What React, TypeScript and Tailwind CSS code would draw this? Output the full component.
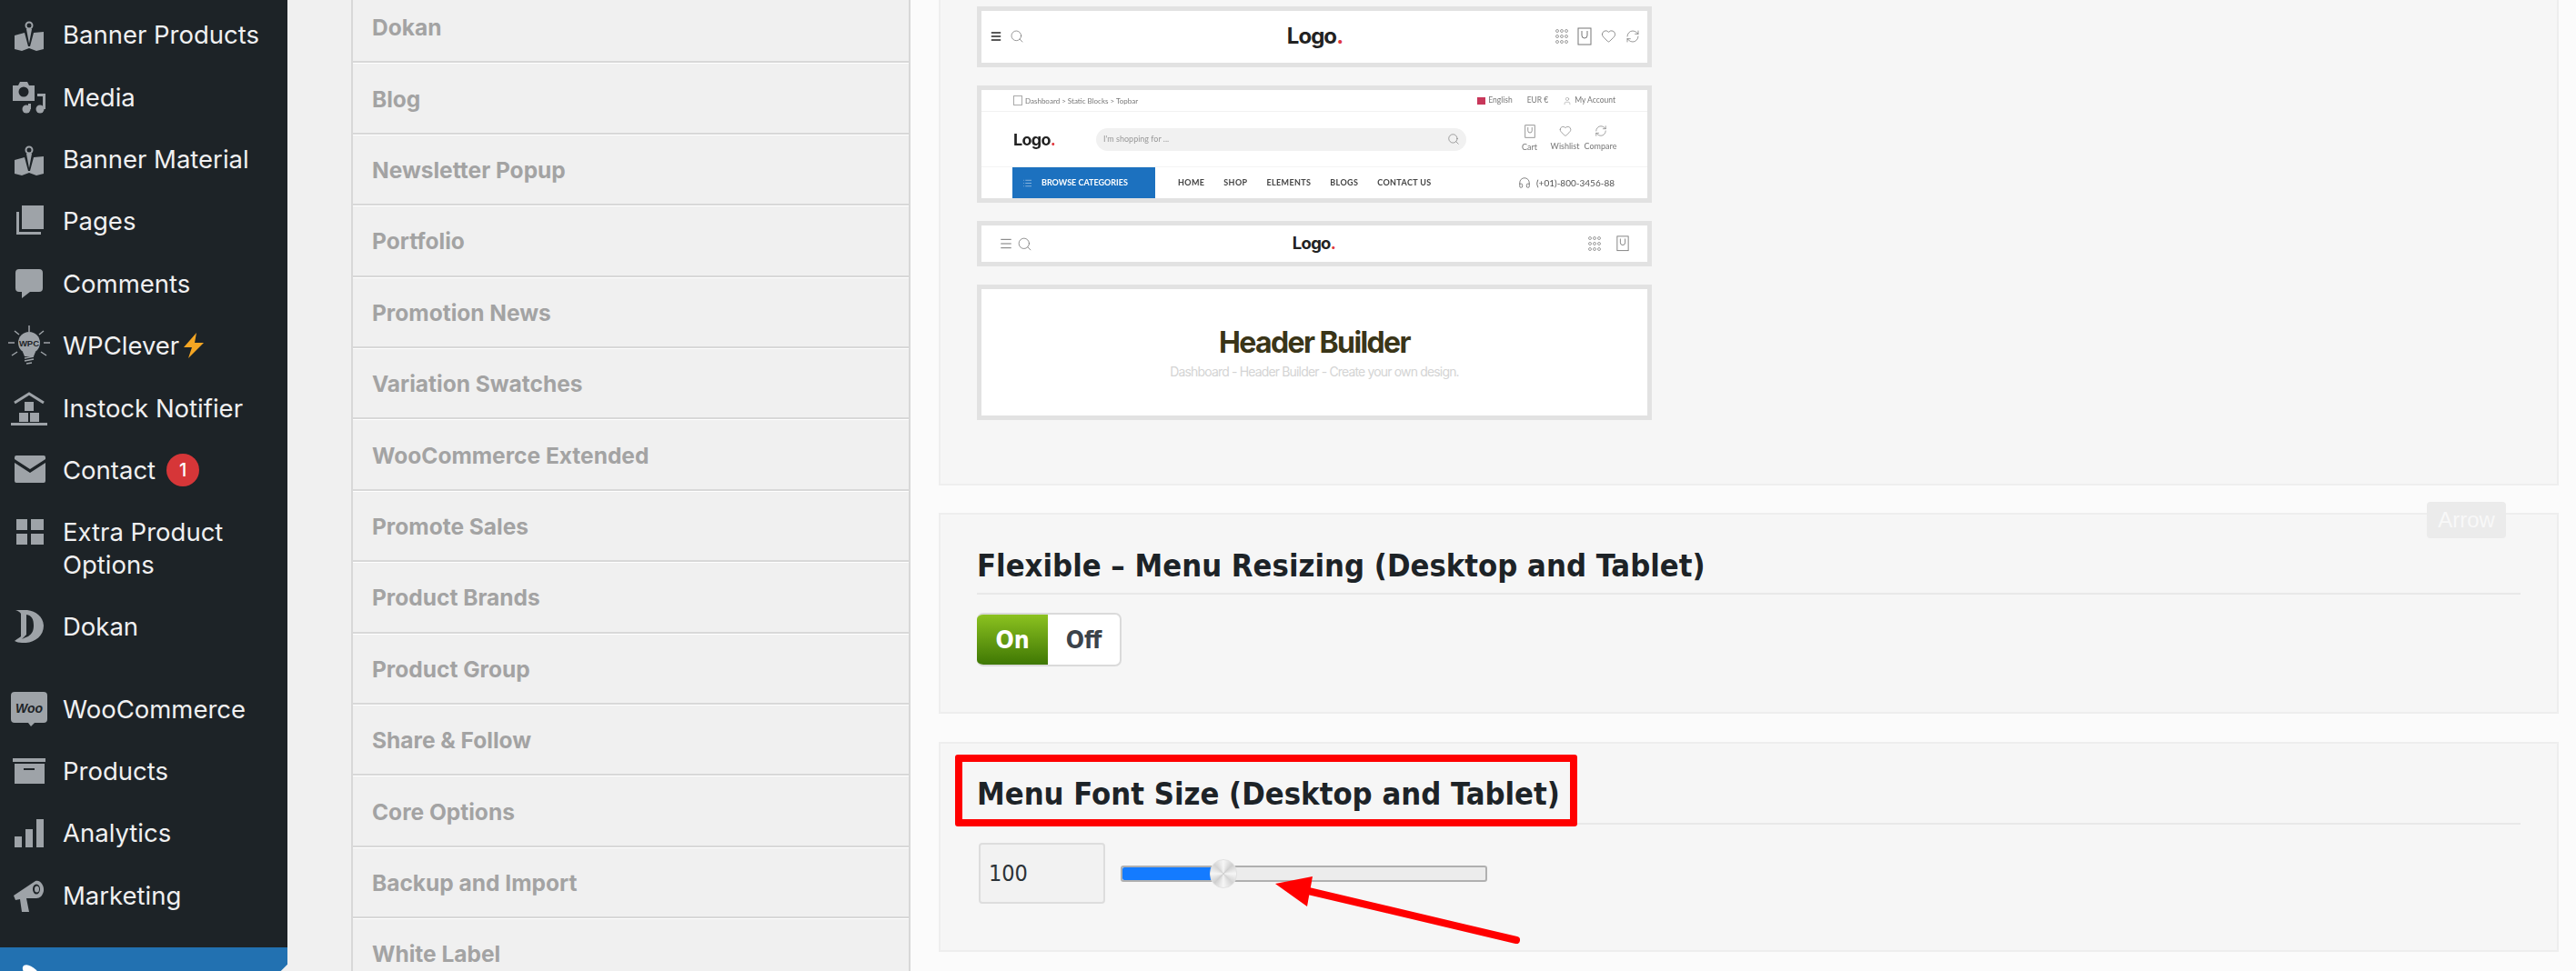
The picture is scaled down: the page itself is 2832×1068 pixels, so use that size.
import { Heart, Headphones, List, Menu, RefreshCw, Search, User } from "lucide-react";
import type { ReactNode } from "react";

const dejavu = "font-['DejaVu_Sans_Condensed','DejaVu_Sans',sans-serif] font-stretch-condensed";

function Icon({ children }: { children: ReactNode }) {
  return (
    <svg width="36" height="36" viewBox="0 0 36 36" className="shrink-0 fill-[#9ea3a8]">
      {children}
    </svg>
  );
}

const BannerIcon = (
  <Icon>
    <path d="M2 19l11-3 4 15h2l4-15 11-1v19l-8 2-8-3-8 3-8-2z" />
    <path d="M15 12l3 16 3-16z" />
    <circle cx="18" cy="8" r="3.5" fill="none" stroke="#9ea3a8" strokeWidth="2" />
  </Icon>
);

const icons: Record<string, ReactNode> = {
  banner: BannerIcon,
  media: (
    <Icon>
      <path d="M0 5h6l2-4h8l2 4h6v17H0z" />
      <circle cx="12" cy="12" r="5.5" fill="#1d2327" />
      <path d="M27 14h9v17h-3V17h-6z" />
      <circle cx="30" cy="31" r="4.5" />
      <circle cx="15" cy="31" r="4.5" />
      <path d="M17 25h3v6h-3z" />
    </Icon>
  ),
  pages: (
    <Icon>
      <path d="M10 1h24v26H10z" />
      <path d="M4 8h3v22h24v3H4z" />
    </Icon>
  ),
  comments: (
    <Icon>
      <path d="M7 2h22a4 4 0 0 1 4 4v17a4 4 0 0 1-4 4H19l-9 7v-7H7a4 4 0 0 1-4-4V6a4 4 0 0 1 4-4z" />
    </Icon>
  ),
  wpc: (
    <svg width="48" height="48" viewBox="0 0 48 48" className="shrink-0 -mx-[6px]">
      <g stroke="#9ea3a8" strokeWidth="1.5">
        <path d="M24 2v7M8 8l5 4M40 8l-5 4M1 21h7M47 21h-7M5 35l6-4M43 35l-6-4" />
      </g>
      <circle cx="24" cy="21" r="12" fill="#9ea3a8" />
      <path d="M17 31h14l-2 5H19z" fill="#9ea3a8" />
      <path d="M19 38l10-2M19 41l10-2M21 44l6-1" stroke="#9ea3a8" strokeWidth="1.6" />
      <text x="24" y="24.5" textAnchor="middle" fontSize="9.5" fontWeight="700" fill="#1d2327" fontFamily="Liberation Sans">WPC</text>
    </svg>
  ),
  stock: (
    <svg width="40" height="40" viewBox="0 0 40 40" className="shrink-0 -mx-[2px]">
      <path d="M4 14L20 4l16 10" fill="none" stroke="#9ea3a8" strokeWidth="3" />
      <path d="M15 13h10v10H15zM9 25h10v10H9zM21 25h10v10H21zM0 36h40v3H0z" fill="#9ea3a8" />
    </svg>
  ),
  mail: (
    <Icon>
      <path d="M4 2h30a2 2 0 0 1 2 2v2L19 17 2 6V4a2 2 0 0 1 2-2z" />
      <path d="M2 10l17 11 17-11v20a2 2 0 0 1-2 2H4a2 2 0 0 1-2-2z" />
    </Icon>
  ),
  grid: (
    <Icon>
      <path d="M4 4h12v12H4zM20 4h14v12H20zM4 20h12v12H4zM20 20h14v12H20z" />
    </Icon>
  ),
  dokan: (
    <Icon>
      <path d="M3 0c14-2 30 2 31 17 0 13-12 20-24 19-3 0-6-1-8-2 4-3 6-4 7-5V4C8 2 6 1 3 0z" />
      <path d="M15 5c6 1 8 5 8 12 0 6-2 9-6 12-3 1-5 2-7 3l5-5z" fill="#1d2327" />
    </Icon>
  ),
  woo: (
    <svg width="40" height="40" viewBox="0 0 40 40" className="shrink-0 -mx-[2px]">
      <path d="M4 1h32a4 4 0 0 1 4 4v26a4 4 0 0 1-4 4H26l-4 4-3-4H4a4 4 0 0 1-4-4V5a4 4 0 0 1 4-4z" fill="#9ea3a8" />
      <text x="20" y="24" textAnchor="middle" fontSize="14" fontWeight="700" fontStyle="italic" fill="#1d2327" fontFamily="Liberation Sans">Woo</text>
    </svg>
  ),
  box: (
    <Icon>
      <path d="M0 4h36v4H0z" />
      <path d="M2 10h33v22H2zM12 15v2h12v-2z" fillRule="evenodd" />
    </Icon>
  ),
  chart: (
    <Icon>
      <path d="M2 22h8v12H2zM14 14h8v20h-8zM26 3h8v31h-8z" />
    </Icon>
  ),
  megaphone: (
    <Icon>
      <path d="M1 18L25 2c5-2 10 5 9 11-1 5-4 8-8 8l-11 0 3 15h-8l-2-14-5 1z" />
      <ellipse cx="26" cy="11" rx="4" ry="5.5" fill="#1d2327" />
      <ellipse cx="26.500" cy="11" rx="2.500" ry="3.500" fill="#9ea3a8" />
    </Icon>
  ),
};

function SideItem({ icon, label, tall, children }: { icon: string; label: string; tall?: boolean; children?: ReactNode }) {
  return (
    <div className={`shrink-0 flex gap-[19px] pl-[14px] pr-3 ${tall ? "h-[104px] items-start pt-[16px]" : "h-[68.400px] items-center"}`}>
      {icons[icon]}
      <span className="text-[#f0f0f1] text-[27.500px] leading-[36px] flex items-center">
        {label}
        {children}
      </span>
    </div>
  );
}

function Sidebar() {
  return (
    <aside className="w-[316px] shrink-0 bg-[#1d2327] flex flex-col pt-[4px] font-['Inter'] relative">
      <SideItem icon="banner" label="Banner Products" />
      <SideItem icon="media" label="Media" />
      <SideItem icon="banner" label="Banner Material" />
      <SideItem icon="pages" label="Pages" />
      <SideItem icon="comments" label="Comments" />
      <SideItem icon="wpc" label="WPClever">
        <svg width="26" height="30" viewBox="0 0 26 30" className="ml-[3px]">
          <path d="M16 1L2 17h9l-4 12 17-17h-10z" fill="#f5a623" />
        </svg>
      </SideItem>
      <SideItem icon="stock" label="Instock Notifier" />
      <SideItem icon="mail" label="Contact">
        <span className="ml-[12px] w-[36px] h-[36px] rounded-full bg-[#d63638] text-white text-[20px] font-medium flex items-center justify-center">
          1
        </span>
      </SideItem>
      <SideItem icon="grid" label="Extra Product Options" tall />
      <SideItem icon="dokan" label="Dokan" />
      <div className="h-[22px] shrink-0" />
      <SideItem icon="woo" label="WooCommerce" />
      <SideItem icon="box" label="Products" />
      <SideItem icon="chart" label="Analytics" />
      <SideItem icon="megaphone" label="Marketing" />
      <div className="mt-[23px] h-[80px] shrink-0 bg-[#2271b1] flex gap-[19px] pl-[14px] pt-[18px] relative">
        <svg width="36" height="36" viewBox="0 0 36 36" className="shrink-0">
          <path d="M12 2c4-2 8 0 14 5l4 6-8 6-6-5C12 10 9 5 12 2z" fill="#fff" />
        </svg>
        <span className="text-white text-[27.500px] leading-[36px] font-semibold">Appearance</span>
        <span className="absolute right-[-11.500px] top-[22.500px] w-[23px] h-[23px] bg-[#f0f0f0] rotate-45" />
      </div>
    </aside>
  );
}

const tabs = [
  "Dokan",
  "Blog",
  "Newsletter Popup",
  "Portfolio",
  "Promotion News",
  "Variation Swatches",
  "WooCommerce Extended",
  "Promote Sales",
  "Product Brands",
  "Product Group",
  "Share & Follow",
  "Core Options",
  "Backup and Import",
  "White Label",
];

function TabList() {
  return (
    <div className="shrink-0 w-[685px] bg-[#f0f0f0] pl-[70px]">
      <ul className="w-[615px] -mt-[9px] border-x-2 border-[#d8d8d8] font-['Inter']">
        {tabs.map((tab) => (
          <li
            key={tab}
            className="h-[78.400px] pl-[21px] pt-[2px] flex items-center border-b-2 border-b-[#d8d8d8] border-t border-t-white text-[24.500px] font-bold text-[#a3a3a3]"
          >
            {tab}
          </li>
        ))}
      </ul>
    </div>
  );
}

function Logo({ size }: { size: string }) {
  return (
    <span className={`font-['Inter'] font-bold tracking-[-0.04em] text-[#222] ${size}`}>
      Logo<span className="text-[#e0383e]">.</span>
    </span>
  );
}

function Dots() {
  const spots = [0, 1, 2];
  return (
    <svg width="14" height="18" viewBox="0 0 14 18" fill="none" stroke="#888" strokeWidth="0.8">
      {spots.map((r) => spots.map((c) => <circle key={`${r}-${c}`} cx={2 + c * 5} cy={3 + r * 6} r="1.500" />))}
    </svg>
  );
}

function Bag({ size = 16 }: { size?: number }) {
  return (
    <svg width={size} height={size * 1.25} viewBox="0 0 16 20" fill="none" stroke="#777" strokeWidth="1">
      <rect x="1" y="1" width="14" height="18" />
      <path d="M5 4v5a3 3 0 0 0 6 0V4" />
    </svg>
  );
}

const thin = { strokeWidth: 1, color: "#666" };

function HeaderOne() {
  return (
    <div className="h-[67px] border-[5px] border-[#e2e2e2] bg-white flex items-center pb-[2px] pl-[9px] pr-[8px]">
      <div className="flex-1 flex items-center gap-[8px]">
        <Menu size={14} strokeWidth={2.500} color="#222" />
        <Search size={16} {...thin} />
      </div>
      <Logo size="text-[24px]" />
      <div className="flex-1 flex items-center justify-end gap-[10px]">
        <Dots />
        <Bag />
        <Heart size={17} {...thin} />
        <RefreshCw size={16} {...thin} />
      </div>
    </div>
  );
}

function HeaderTwo() {
  return (
    <div className="h-[129px] border-[5px] border-[#e2e2e2] bg-white flex flex-col font-['Lato'] blur-[0.3px]">
      <div className="h-[24px] shrink-0 px-[35px] flex items-center justify-between border-b border-[#f1f1f1] text-[8px] text-[#777]">
        <span className="flex items-center gap-[3px]">
          <span className="w-[10px] h-[11px] border border-[#aaa]" />
          Dashboard &gt; Static Blocks &gt; Topbar
        </span>
        <span className="flex items-center gap-[16px] text-[8.500px]">
          <span className="flex items-center gap-[3px]">
            <span className="w-[9px] h-[8px] bg-[#c8375a]" />
            English
          </span>
          <span>EUR €</span>
          <span className="flex items-center gap-[3px]">
            <User size={10} strokeWidth={1} />
            My Account
          </span>
        </span>
      </div>
      <div className="h-[61px] shrink-0 pl-[35px] pr-[32px] flex items-center border-b border-[#f4f4f4]">
        <span className="w-[91px]">
          <Logo size="text-[18px]" />
        </span>
        <div className="w-[407px] h-[25px] rounded-full bg-[#f1f1f1] flex items-center justify-between pl-[8px] pr-[7px] text-[9px] text-[#999]">
          I&apos;m shopping for ...
          <Search size={14} {...thin} />
        </div>
        <div className="ml-auto flex text-[#777] text-[9px] text-center">
          <span className="w-[39px] flex flex-col items-center gap-[3px]">
            <Bag size={12} />
            Cart
          </span>
          <span className="w-[39px] flex flex-col items-center gap-[3px]">
            <Heart size={14} {...thin} />
            Wishlist
          </span>
          <span className="w-[39px] flex flex-col items-center gap-[3px]">
            <RefreshCw size={14} {...thin} />
            Compare
          </span>
        </div>
      </div>
      <div className="flex-1 pl-[34px] pr-[36px] flex items-center text-[9px]">
        <div className="w-[157px] self-stretch bg-[#1c71bf] text-white font-bold flex items-center gap-[10px] pl-[11px]">
          <List size={11} strokeWidth={1} />
          BROWSE CATEGORIES
        </div>
        <div className="ml-[25px] flex gap-[21px] tracking-[0.04em] font-bold text-[#444]">
          <span>HOME</span>
          <span>SHOP</span>
          <span>ELEMENTS</span>
          <span>BLOGS</span>
          <span>CONTACT US</span>
        </div>
        <span className="ml-auto flex items-center gap-[6px] text-[10px] text-[#555]">
          <Headphones size={14} strokeWidth={1.200} />
          (+01)-800-3456-88
        </span>
      </div>
    </div>
  );
}

function HeaderThree() {
  return (
    <div className="h-[50px] border-[5px] border-[#e2e2e2] bg-white flex items-center pl-[19px] pr-[20px]">
      <div className="flex-1 flex items-center gap-[4px]">
        <Menu size={16} strokeWidth={1.500} color="#777" />
        <Search size={17} {...thin} />
      </div>
      <Logo size="text-[18.500px]" />
      <div className="flex-1 flex items-center justify-end gap-[17px]">
        <Dots />
        <Bag size={14} />
      </div>
    </div>
  );
}

function HeaderFour() {
  return (
    <div className="h-[149px] border-[5px] border-[#e2e2e2] bg-white flex flex-col items-center justify-center font-['Inter']">
      <span className="text-[32px] leading-[40px] font-bold tracking-[-0.05em] text-[#3a3518]">Header Builder</span>
      <span className="mt-[1px] text-[14px] tracking-[-0.06em] text-[#d4d4d4]">Dashboard - Header Builder - Create your own design.</span>
    </div>
  );
}

function Heading({ children }: { children: ReactNode }) {
  return <h3 className={`${dejavu} font-bold text-[34.300px] leading-[40px] text-[#1d2327]`}>{children}</h3>;
}

function FontSizeSlider() {
  return (
    <div className="mt-[20px] flex items-center pl-[2px]">
      <div className={`${dejavu} w-[139px] h-[67px] rounded-[4px] border-2 border-[#dddddd] bg-[#f2f2f2] flex items-center pl-[9px] text-[25px] text-[#2c3338]`}>
        100
      </div>
      <div className="ml-[17px] relative w-[403px] h-[18px] rounded-[3px] border-2 border-[#b0b0b0] bg-[#ececec]">
        <div className="h-full w-[113px] rounded-l-[2px] bg-[#147bff]" />
        <span className="absolute left-[96px] top-[-9px] w-[30px] h-[32px] rounded-full border border-[#e2e2e2] bg-[conic-gradient(#f6f6f6_0deg,#cfcfcf_45deg,#f6f6f6_90deg,#d4d4d4_135deg,#f6f6f6_180deg,#cfcfcf_225deg,#f6f6f6_270deg,#d4d4d4_315deg,#f6f6f6_360deg)]" />
      </div>
    </div>
  );
}

export default function App() {
  return (
    <div className="relative w-[2832px] h-[1068px] overflow-hidden flex bg-[#fbfbfb]">
      <Sidebar />
      <TabList />
      <main className="flex-1 pl-[31px] pr-[19px] flex flex-col">
        <section className="h-[534px] shrink-0 border-x-2 border-b-2 border-[#eeeeee] bg-[#f6f6f6] pt-[7px] pl-[40px]">
          <div className="w-[742px] flex flex-col gap-[20px]">
            <HeaderOne />
            <HeaderTwo />
            <HeaderThree />
            <HeaderFour />
          </div>
        </section>

        <section className="relative mt-[30px] h-[221px] shrink-0 border-2 border-[#eeeeee] bg-[#f6f6f6] pt-[36px] px-[40px]">
          <Heading>Flexible – Menu Resizing (Desktop and Tablet)</Heading>
          <div className="mt-[10px] border-t-2 border-[#e8e8e8]" />
          <div className={`${dejavu} mt-[20px] w-[159px] h-[59px] rounded-[7px] border-2 border-l-0 border-[#dadada] bg-white flex items-stretch text-[26.500px] font-bold overflow-hidden`}>
            <span className="w-[78px] bg-gradient-to-b from-[#8cc220] to-[#3f7804] text-white flex items-center justify-center">On</span>
            <span className="flex-1 text-[#3c434a] flex items-center justify-center">Off</span>
          </div>
          <span className="absolute left-[1634px] -top-[14px] w-[87px] h-[40px] rounded-[4px] bg-[#ebebeb] text-[#f8f8f8] text-[24px] font-['Liberation_Sans'] flex items-center justify-center">
            Arrow
          </span>
        </section>

        <section className="relative mt-[31px] h-[231px] shrink-0 border-2 border-[#eeeeee] bg-[#f6f6f6] pt-[35px] px-[40px]">
          <Heading>Menu Font Size (Desktop and Tablet)</Heading>
          <div className="mt-[12px] border-t-2 border-[#e8e8e8]" />
          <FontSizeSlider />
          <div className="absolute left-[16px] top-[12px] w-[684px] h-[79px] rounded-[3px] border-[8px] border-[#ff0000]" />
        </section>
      </main>
      {/* annotation arrow */}
      <svg width="2832" height="1068" viewBox="0 0 2832 1068" className="absolute left-0 top-0 pointer-events-none">
        <path d="M1402 972l41-8-6 33z" fill="#ff0000" />
        <path d="M1430 978L1667 1034" fill="none" stroke="#ff0000" strokeWidth="8" strokeLinecap="round" />
      </svg>
    </div>
  );
}
